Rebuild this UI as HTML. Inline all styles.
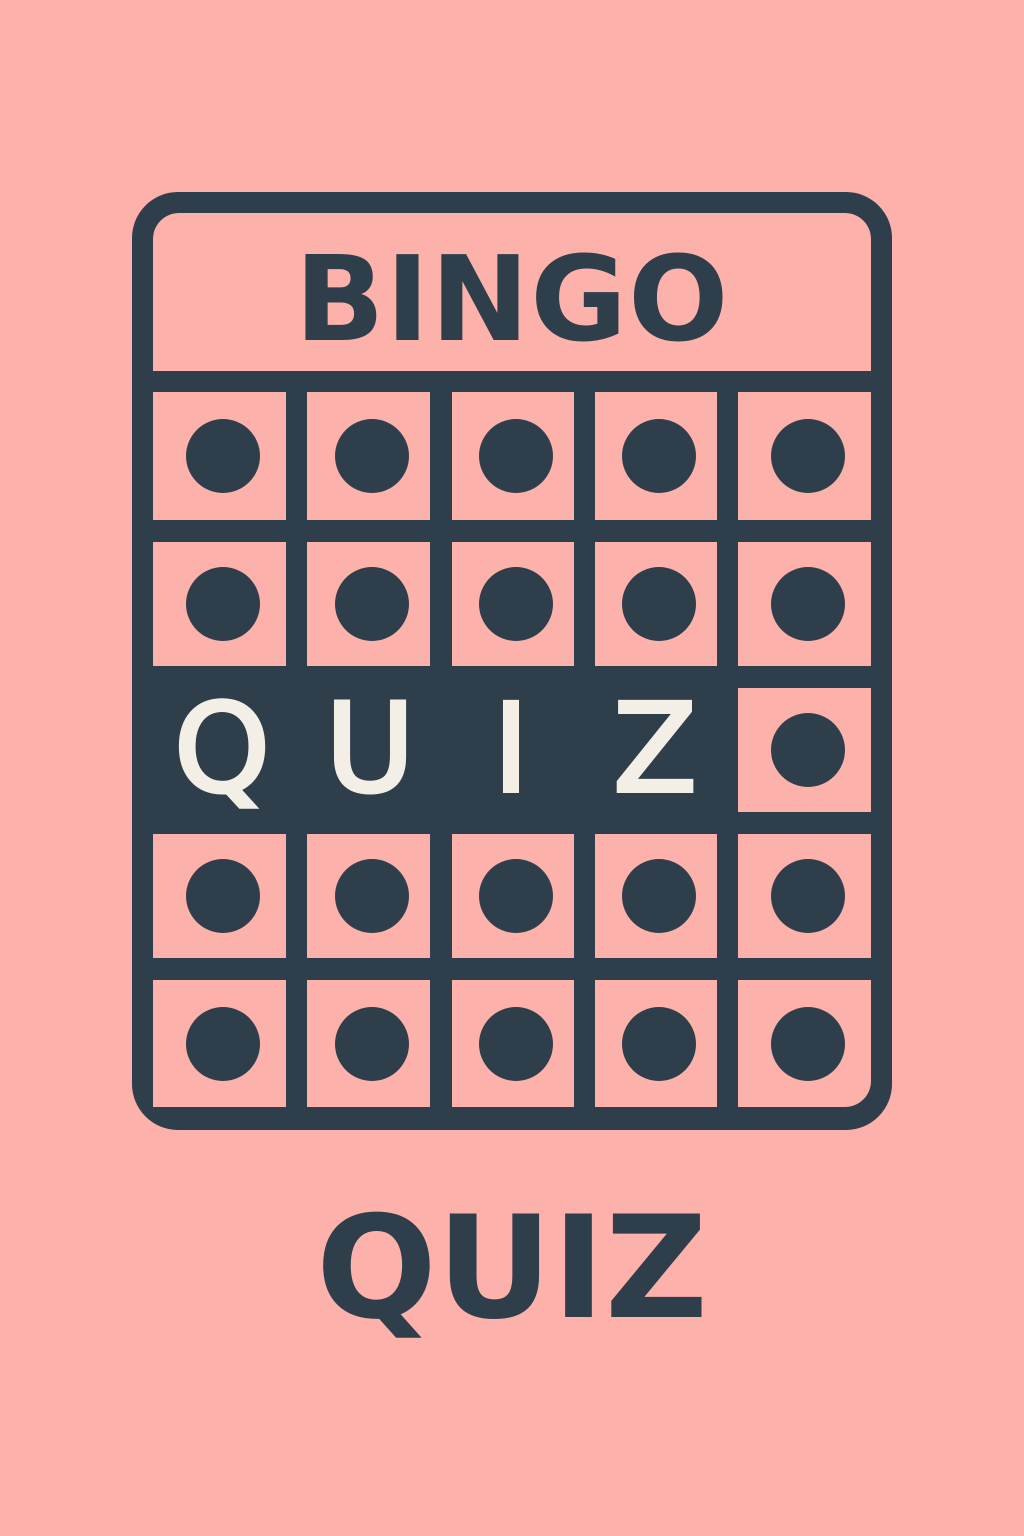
<!DOCTYPE html>
<html><head><style>
body{margin:0;width:1024px;height:1536px;background:#fdb1ab;position:relative;overflow:hidden;font-family:"DejaVu Sans","Liberation Sans",sans-serif}
.card{position:absolute;left:132px;top:192px;width:718px;height:896px;border:21px solid #2f3e4b;border-radius:46px;background:#2f3e4b;overflow:hidden}
.hdr{position:absolute;left:0;top:0;width:718px;height:158px;background:#fdb1ab;border-radius:26px 26px 0 0}
.c{position:absolute;background:#fdb1ab}
.c::after{content:"";position:absolute;left:50%;top:50%;width:74px;height:74px;margin:-37px 0 0 -34px;border-radius:50%;background:#2f3e4b}
.t{position:absolute;font-weight:bold;text-align:center;line-height:1}
.q{position:absolute;text-align:center;line-height:1;width:100px;top:688px;font-size:122px;color:#f3efe6;-webkit-text-stroke:4px #f3efe6}
</style></head><body>
<div class="card">
<div class="hdr"></div>
</div>
<div id="g"></div>
<div class="t" style="left:132px;width:760px;top:240px;font-size:118px;color:#2f3e4b;letter-spacing:1px">BINGO</div>
<div class="q" style="left:172px">Q</div>
<div class="q" style="left:320px">U</div>
<div class="q" style="left:461px">I</div>
<div class="q" style="left:605px">Z</div>
<div class="t" style="left:132px;width:760px;top:1198px;font-size:142px;color:#2f3e4b;letter-spacing:0px">QUIZ</div>
<script>
var xs=[[153,286],[307,430],[452,574],[595,717],[738,871]];
var ys=[[392,520],[542,666],[688,812],[834,958],[980,1107]];
var h="";
for(var r=0;r<5;r++)for(var c=0;c<5;c++){
 if(r==2&&c<4)continue;
 var br=(r==4&&c==4)?"border-radius:0 0 26px 0;":"";
 h+='<div class="c" style="'+br+'left:'+xs[c][0]+'px;top:'+ys[r][0]+'px;width:'+(xs[c][1]-xs[c][0])+'px;height:'+(ys[r][1]-ys[r][0])+'px"></div>';
}
document.getElementById("g").innerHTML=h;
</script>
</body></html>
